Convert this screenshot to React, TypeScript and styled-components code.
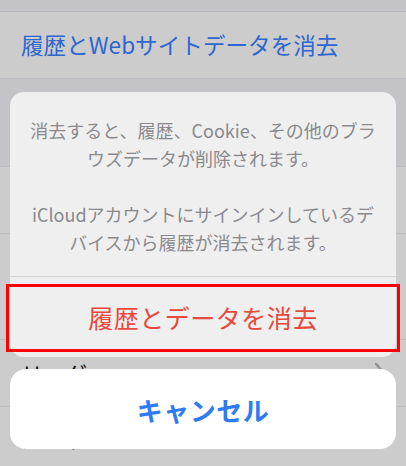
import React from "react";
import styled, { createGlobalStyle } from "styled-components";

const GlobalStyle = createGlobalStyle`
  html, body {
    margin: 0;
    padding: 0;
    background: #c4c4c8;
  }
  body {
    font-family: "Noto Sans CJK JP", "Noto Sans", sans-serif;
  }
`;

const Page = styled.div`
  position: relative;
  width: 406px;
  height: 466px;
  overflow: hidden;
  background: #c4c4c8;
`;

const Gap = styled.div<{ $h: number }>`
  height: ${(p) => p.$h}px;
  background: #c4c4c8;
  border-bottom: 1px solid #b9b9bd;
`;

const Row = styled.div<{ $h: number; $tone?: string }>`
  height: ${(p) => p.$h}px;
  box-sizing: border-box;
  display: flex;
  align-items: center;
  justify-content: space-between;
  padding: 0 20px 0 21px;
  background: #cccccc;
  border-bottom: 1px solid #bdbdc0;
  color: ${(p) => p.$tone || "#111"};
  font-size: ${(p) => (p.$tone ? 22.6 : 22)}px;
  line-height: 1;
  white-space: nowrap;
`;

const Chevron = styled.svg`
  width: 12px;
  height: 22px;
`;

const Overlay = styled.div`
  position: absolute;
  inset: 0;
  display: flex;
  flex-direction: column;
  justify-content: flex-end;
  gap: 12px;
  padding: 0 10px 17px;
`;

const Sheet = styled.div`
  background: #efefef;
  border-radius: 14px;
  display: flex;
  flex-direction: column;
`;

const Message = styled.div`
  padding: 24px 8px 20px;
  color: #8a8a8e;
  font-size: 18px;
  line-height: 28px;
  text-align: center;
  white-space: nowrap;
`;

const Para = styled.p<{ $gap?: boolean }>`
  margin: ${(p) => (p.$gap ? "28px 0 0" : "0")};
`;

const Separator = styled.div`
  height: 1px;
  background: #d2d2d4;
`;

const Action = styled.div<{ $color: string; $bold?: boolean; $size: number }>`
  position: relative;
  height: 80px;
  display: flex;
  align-items: center;
  justify-content: center;
  color: ${(p) => p.$color};
  font-size: ${(p) => p.$size}px;
  font-weight: ${(p) => (p.$bold ? 700 : 400)};
  letter-spacing: 0.5px;
`;

const CancelCard = styled.div`
  background: #ffffff;
  border-radius: 16px;
`;

const Highlight = styled.div`
  position: absolute;
  left: -4px;
  right: -4px;
  top: 7px;
  bottom: 5px;
  border: 3px solid #ff0000;
  pointer-events: none;
`;

export default function App() {
  return (
    <>
      <GlobalStyle />
      <Page>
        <Gap $h={11} />
        <Row $h={67} $tone="#2e67cf">
          履歴とWebサイトデータを消去
        </Row>
        <Gap $h={87} />
        <Row $h={67} />
        <Row $h={106} />
        <Row $h={67}>
          リーダー
          <Chevron viewBox="0 0 12 22">
            <path d="M2 2 L10 11 L2 20" fill="none" stroke="#8e8e93" strokeWidth="2.4" strokeLinecap="round" strokeLinejoin="round" />
          </Chevron>
        </Row>
        <Row $h={62}>カメラ</Row>
        <Overlay>
          <Sheet>
            <Message>
              <Para>
                消去すると、履歴、Cookie、その他のブラ
                <br />
                ウズデータが削除されます。
              </Para>
              <Para $gap>
                iCloudアカウントにサインインしているデ
                <br />
                バイスから履歴が消去されます。
              </Para>
            </Message>
            <Separator />
            <Action $color="#e7493d" $size={25}>
              履歴とデータを消去
              <Highlight />
            </Action>
          </Sheet>
          <CancelCard>
            <Action $color="#2f7bf2" $size={26} $bold>
              キャンセル
            </Action>
          </CancelCard>
        </Overlay>
      </Page>
    </>
  );
}
